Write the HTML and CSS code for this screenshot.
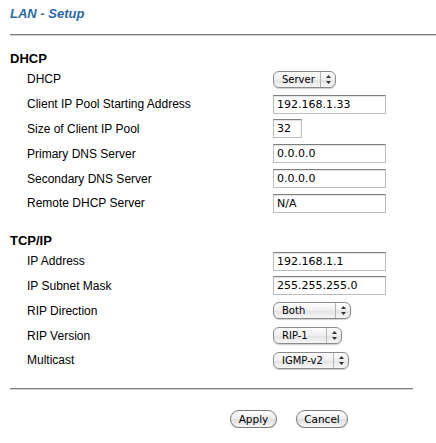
FILE: index.html
```html
<!DOCTYPE html>
<html lang="en">
<head>
  <meta charset="UTF-8">
  <title>LAN - Setup</title>
  <link rel="stylesheet" href="styles.css">
</head>
<body>

<div class="page">
  <h1 class="title">LAN - Setup</h1>
  <div class="rule rule-top"></div>

  <div class="group">
    <h2>DHCP</h2>
    <div class="row">
      <span class="label">DHCP</span>
      <span class="popup popup-mode"><span class="popup-text">Server</span><span class="popup-arrows"><svg width="5" height="9" viewBox="0 0 5 9"><path d="M2.5 0 L5 3 H0 Z M2.5 9 L5 6 H0 Z" fill="#333"/></svg></span></span>
    </div>
    <div class="row">
      <span class="label">Client IP Pool Starting Address</span>
      <input class="field" type="text" value="192.168.1.33">
    </div>
    <div class="row">
      <span class="label">Size of Client IP Pool</span>
      <input class="field field-small" type="text" value="32">
    </div>
    <div class="row">
      <span class="label">Primary DNS Server</span>
      <input class="field" type="text" value="0.0.0.0">
    </div>
    <div class="row">
      <span class="label">Secondary DNS Server</span>
      <input class="field" type="text" value="0.0.0.0">
    </div>
    <div class="row">
      <span class="label">Remote DHCP Server</span>
      <input class="field" type="text" value="N/A">
    </div>
  </div>

  <div class="group">
    <h2>TCP/IP</h2>
    <div class="row">
      <span class="label">IP Address</span>
      <input class="field" type="text" value="192.168.1.1">
    </div>
    <div class="row">
      <span class="label">IP Subnet Mask</span>
      <input class="field" type="text" value="255.255.255.0">
    </div>
    <div class="row">
      <span class="label">RIP Direction</span>
      <span class="popup popup-direction"><span class="popup-text">Both</span><span class="popup-arrows"><svg width="5" height="9" viewBox="0 0 5 9"><path d="M2.5 0 L5 3 H0 Z M2.5 9 L5 6 H0 Z" fill="#333"/></svg></span></span>
    </div>
    <div class="row">
      <span class="label">RIP Version</span>
      <span class="popup popup-version"><span class="popup-text">RIP-1</span><span class="popup-arrows"><svg width="5" height="9" viewBox="0 0 5 9"><path d="M2.5 0 L5 3 H0 Z M2.5 9 L5 6 H0 Z" fill="#333"/></svg></span></span>
    </div>
    <div class="row">
      <span class="label">Multicast</span>
      <span class="popup popup-multicast"><span class="popup-text">IGMP-v2</span><span class="popup-arrows"><svg width="5" height="9" viewBox="0 0 5 9"><path d="M2.5 0 L5 3 H0 Z M2.5 9 L5 6 H0 Z" fill="#333"/></svg></span></span>
    </div>
  </div>

  <div class="rule rule-bottom"></div>

  <div class="actions">
    <button class="btn btn-apply">Apply</button>
    <button class="btn btn-cancel">Cancel</button>
  </div>
</div>

</body>
</html>
```

FILE: styles.css
```css
* {
  box-sizing: border-box;
}
body {
  margin: 0;
  background: #fff;
  color: #000;
  font-family: "Liberation Sans", Arial, sans-serif;
}
.page {
  padding: 6px 0 0 10px;
}
.title {
  margin: 0;
  font-size: 13px;
  line-height: 16px;
  font-weight: bold;
  font-style: italic;
  color: #2d6aa3;
}
.rule {
  height: 0;
  border-top: 1px solid #7c7c7c;
  box-shadow: 0 1px 0 #d4d4d4;
}
.rule-top {
  margin-top: 12px;
  width: 426px;
}
.rule-bottom {
  margin-top: 15px;
  width: 403px;
}
h2 {
  margin: 0;
  font-size: 13px;
  line-height: 16px;
  font-weight: bold;
}
.group {
  margin-top: 16px;
}
.group + .group {
  margin-top: 17px;
}
.row {
  display: grid;
  grid-template-columns: 263px auto;
  align-items: center;
  justify-items: start;
  height: 24.8px;
}
.label {
  padding-left: 17px;
  font-size: 12px;
}
.field {
  width: 113px;
  height: 19px;
  margin: 0;
  padding: 0 0 0 3px;
  border: 1px solid #bdbdbd;
  border-top-color: #7f7f7f;
  box-shadow: inset 0 1px 1px rgba(0,0,0,0.12);
  background: #fff;
  color: #000;
  font-family: "DejaVu Sans", sans-serif;
  font-size: 11px;
}
.field-small {
  width: 29px;
}
.popup {
  display: inline-flex;
  align-items: center;
  height: 17px;
  border: 1px solid #8a8a8a;
  border-radius: 6px;
  background: linear-gradient(#fdfdfd, #eeeeee 50%, #e2e2e2 51%, #f6f6f6);
  box-shadow: 0 1px 1px rgba(0,0,0,0.2);
  font-family: "DejaVu Sans", sans-serif;
  font-size: 10px;
}
.popup-text {
  flex: 1;
  padding-left: 8px;
}
.popup-arrows {
  align-self: stretch;
  width: 15px;
  border-left: 1px solid #b4b4b4;
  display: flex;
  align-items: center;
  justify-content: center;
}
.popup-arrows svg {
  display: block;
}
.popup-mode { width: 63px; }
.popup-direction { width: 78px; }
.popup-version { width: 69px; }
.popup-multicast { width: 76px; }
.actions {
  display: flex;
  gap: 19px;
  margin-top: 21px;
  padding-left: 220px;
}
.btn {
  height: 18px;
  margin: 0;
  padding: 0;
  border: 1px solid #7a7a7a;
  border-radius: 9px;
  background: linear-gradient(#ffffff, #ececec 50%, #dedede 51%, #f6f6f6);
  box-shadow: 0 1px 1px rgba(0,0,0,0.25);
  color: #000;
  font-family: "DejaVu Sans", sans-serif;
  font-size: 10.5px;
  line-height: 16px;
}
.btn-apply { width: 47px; }
.btn-cancel { width: 52px; }
```
